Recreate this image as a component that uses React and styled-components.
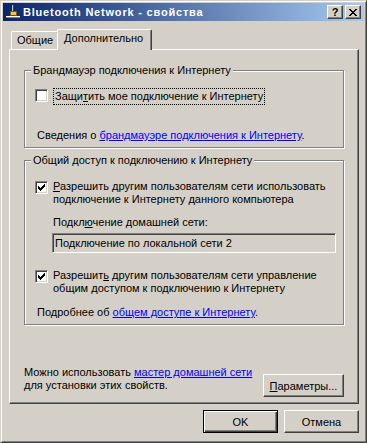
import React from 'react';
import styled, { createGlobalStyle } from 'styled-components';

const FACE = '#D4D0C8';
const SHADOW = '#808080';
const DARK = '#404040';
const LINK = '#0000FF';

const GlobalStyle = createGlobalStyle`
  html, body {
    margin: 0;
    padding: 0;
    background: ${FACE};
  }
  body {
    font-family: "Liberation Sans", Arial, "DejaVu Sans", sans-serif;
    font-size: 11px;
    color: #000;
  }
  * {
    box-sizing: border-box;
  }
`;

const WindowStyled = styled.div`
  width: 367px;
  height: 443px;
  display: flex;
  flex-direction: column;
  background: ${FACE};
  border: 1px solid;
  border-color: ${FACE} ${DARK} ${DARK} ${FACE};
  box-shadow: inset 1px 1px 0 #fff, inset -1px -1px 0 ${SHADOW};
  padding: 2px;
`;

const TitleBarStyled = styled.div`
  flex: none;
  height: 18px;
  display: flex;
  align-items: center;
  padding: 0 3px 0 2px;
  background: linear-gradient(to right, #0a246a, #a6caf0);
`;

const TitleIconStyled = styled.svg`
  flex: none;
  width: 16px;
  height: 16px;
`;

const TitleTextStyled = styled.span`
  flex: 1;
  margin-left: 2px;
  color: #fff;
  font-weight: bold;
  font-size: 11px;
  letter-spacing: 0.8px;
  white-space: nowrap;
`;

const CaptionButtonStyled = styled.div`
  flex: none;
  width: 16px;
  height: 14px;
  margin-left: ${({ $gap }) => $gap || 0}px;
  display: flex;
  align-items: center;
  justify-content: center;
  background: ${FACE};
  border: 1px solid;
  border-color: #fff ${DARK} ${DARK} #fff;
  box-shadow: inset -1px -1px 0 ${SHADOW};
  font-weight: bold;
  font-size: 11px;
  line-height: 12px;
`;

const BodyStyled = styled.div`
  flex: 1;
  display: flex;
  flex-direction: column;
  padding: 8px 5px 7px 6px;
`;

const TabStripStyled = styled.div`
  flex: none;
  height: 20px;
  display: flex;
  align-items: flex-end;
  padding-left: 2px;
`;

const TabStyled = styled.div`
  position: relative;
  width: ${({ $width }) => $width}px;
  height: ${({ $active }) => ($active ? 21 : 18)}px;
  margin-left: ${({ $active }) => ($active ? -2 : 0)}px;
  margin-bottom: ${({ $active }) => ($active ? -1 : 0)}px;
  z-index: ${({ $active }) => ($active ? 1 : 0)};
  padding-left: ${({ $active }) => ($active ? 6 : 5)}px;
  background: ${FACE};
  border-top: 1px solid #fff;
  border-left: 1px solid #fff;
  border-right: 1px solid ${DARK};
  border-radius: 2px 2px 0 0;
  box-shadow: inset -1px 0 0 ${SHADOW};
  line-height: 17px;
  white-space: nowrap;
`;

const PanelStyled = styled.div`
  flex: none;
  height: 355px;
  display: flex;
  flex-direction: column;
  padding: 0 14px 6px 14px;
  border: 1px solid;
  border-color: #fff ${DARK} ${DARK} #fff;
  box-shadow: inset -1px -1px 0 ${SHADOW};
`;

const GroupStyled = styled.div`
  display: flex;
  flex-direction: column;
  align-items: flex-start;
  margin-top: ${({ $top }) => $top}px;
  padding: 0 0 5px 10px;
  border: 1px solid ${SHADOW};
  box-shadow: 1px 1px 0 #fff, inset 1px 1px 0 #fff;
`;

const GroupTitleStyled = styled.div`
  margin: -7px 0 0 -4px;
  padding: 0 2px;
  background: ${FACE};
  line-height: 13px;
  white-space: nowrap;
`;

const CheckRowStyled = styled.div`
  display: flex;
  align-items: flex-start;
  margin-top: ${({ $top }) => $top}px;
`;

const CheckBoxStyled = styled.span`
  flex: none;
  width: 13px;
  height: 13px;
  margin-top: 1px;
  display: flex;
  align-items: center;
  justify-content: center;
  background: #fff;
  border: 1px solid;
  border-color: ${SHADOW} #fff #fff ${SHADOW};
  box-shadow: inset 1px 1px 0 ${DARK}, inset -1px -1px 0 ${FACE};
`;

const CheckLabelStyled = styled.span`
  margin-left: 5px;
  line-height: 13px;
  white-space: nowrap;
  ${({ $focus }) => ($focus ? 'padding: 1px; border: 1px dotted #000;' : '')}
`;

const TextStyled = styled.div`
  margin-top: ${({ $top }) => $top}px;
  margin-left: ${({ $left }) => $left || 0}px;
  line-height: 13px;
  white-space: nowrap;
`;

const LinkStyled = styled.span`
  color: ${LINK};
  text-decoration: underline;
`;

const KeyStyled = styled.span`
  text-decoration: underline;
`;

const FieldStyled = styled.div`
  width: 284px;
  height: 20px;
  margin-top: 4px;
  margin-left: 17px;
  padding-left: 2px;
  display: flex;
  align-items: center;
  background: ${FACE};
  border: 1px solid;
  border-color: ${SHADOW} #fff #fff ${SHADOW};
  box-shadow: inset 1px 1px 0 ${DARK}, inset -1px -1px 0 ${FACE};
  white-space: nowrap;
`;

const SpacerStyled = styled.div`
  flex: 1;
`;

const FooterStyled = styled.div`
  display: flex;
  justify-content: space-between;
  align-items: flex-end;
`;

const FooterTextStyled = styled.div`
  margin-bottom: 5px;
  line-height: 13px;
  white-space: nowrap;
`;

const ButtonStyled = styled.div`
  flex: none;
  width: ${({ $width }) => $width || 75}px;
  height: 23px;
  display: flex;
  align-items: center;
  justify-content: center;
  background: ${FACE};
  border: 1px solid;
  border-color: ${({ $default }) => ($default ? '#000' : `#fff ${DARK} ${DARK} #fff`)};
  box-shadow: ${({ $default }) => ($default
    ? `inset 1px 1px 0 #fff, inset -1px -1px 0 ${DARK}, inset -2px -2px 0 ${SHADOW}`
    : `inset -1px -1px 0 ${SHADOW}`)};
  white-space: nowrap;
`;

const ButtonRowStyled = styled.div`
  flex: none;
  display: flex;
  justify-content: flex-end;
  gap: 6px;
  margin-top: 6px;
`;

const CLOSE_ROWS = [
  [[0, 2], [6, 2]],
  [[1, 2], [5, 2]],
  [[2, 4]],
  [[3, 2]],
  [[2, 4]],
  [[1, 2], [5, 2]],
  [[0, 2], [6, 2]],
];

const CloseGlyph = () => (
  <svg width="8" height="7" viewBox="0 0 8 7" shapeRendering="crispEdges">
    {CLOSE_ROWS.map((row, y) => row.map(([x, w]) => (
      <rect key={`${y}-${x}`} x={x} y={y} width={w} height="1" fill="#000" />
    )))}
  </svg>
);

const CheckMark = () => (
  <svg width="7" height="7" viewBox="0 0 7 7" shapeRendering="crispEdges">
    <path
      d="M0 2h1v1h1v1h1v-1h1v-1h1v-1h1v-1h1v3h-1v1h-1v1h-1v1h-1v1h-1v-1h-1v-1h-1z"
      fill="#000"
    />
  </svg>
);

const NetworkIcon = () => (
  <TitleIconStyled viewBox="0 0 16 16" shapeRendering="crispEdges">
    <rect x="7" y="1" width="2" height="8" fill="#c0c0c0" />
    <rect x="8" y="1" width="1" height="8" fill="#404040" />
    <rect x="5" y="7" width="6" height="4" fill="#e8c850" stroke="#7a5a00" strokeWidth="1" />
    <rect x="1" y="12" width="14" height="1" fill="#ffffff" />
    <rect x="1" y="13" width="14" height="1" fill="#808080" />
    <rect x="7" y="11" width="2" height="1" fill="#404040" />
  </TitleIconStyled>
);

const Check = ({ checked }) => (
  <CheckBoxStyled>
    {checked ? <CheckMark /> : null}
  </CheckBoxStyled>
);

const App = () => (
  <>
    <GlobalStyle />
    <WindowStyled>
      <TitleBarStyled>
        <NetworkIcon />
        <TitleTextStyled>{'Bluetooth Network - свойства'}</TitleTextStyled>
        <CaptionButtonStyled>{'?'}</CaptionButtonStyled>
        <CaptionButtonStyled $gap={2}>
          <CloseGlyph />
        </CaptionButtonStyled>
      </TitleBarStyled>
      <BodyStyled>
        <TabStripStyled>
          <TabStyled $width={48}>{'Общие'}</TabStyled>
          <TabStyled $width={95} $active>{'Дополнительно'}</TabStyled>
        </TabStripStyled>
        <PanelStyled>
          <GroupStyled $top={20}>
            <GroupTitleStyled>{'Брандмауэр подключения к Интернету'}</GroupTitleStyled>
            <CheckRowStyled $top={11}>
              <Check />
              <CheckLabelStyled $focus>
                {'Защи'}
                <KeyStyled>{'т'}</KeyStyled>
                {'ить мое подключение к Интернету'}
              </CheckLabelStyled>
            </CheckRowStyled>
            <TextStyled $top={24} $left={2}>
              {'Сведения о '}
              <LinkStyled>{'брандмауэре подключения к Интернету'}</LinkStyled>
              {'.'}
            </TextStyled>
          </GroupStyled>
          <GroupStyled $top={12}>
            <GroupTitleStyled>{'Общий доступ к подключению к Интернету'}</GroupTitleStyled>
            <CheckRowStyled $top={13}>
              <Check checked />
              <CheckLabelStyled>
                <KeyStyled>{'Р'}</KeyStyled>
                {'азрешить другим пользователям сети использовать'}
                <br />
                {'подключение к Интернету данного компьютера'}
              </CheckLabelStyled>
            </CheckRowStyled>
            <TextStyled $top={10} $left={18}>
              {'Подкл'}
              <KeyStyled>{'ю'}</KeyStyled>
              {'чение домашней сети:'}
            </TextStyled>
            <FieldStyled>{'Подключение по локальной сети 2'}</FieldStyled>
            <CheckRowStyled $top={16}>
              <Check checked />
              <CheckLabelStyled>
                {'Разрешит'}
                <KeyStyled>{'ь'}</KeyStyled>
                {' другим пользователям сети управление'}
                <br />
                {'общим доступом к подключению к Интернету'}
              </CheckLabelStyled>
            </CheckRowStyled>
            <TextStyled $top={11} $left={2}>
              {'Подробнее об '}
              <LinkStyled>{'общем доступе к Интернету'}</LinkStyled>
              {'.'}
            </TextStyled>
          </GroupStyled>
          <SpacerStyled />
          <FooterStyled>
            <FooterTextStyled>
              {'Можно использовать '}
              <LinkStyled>{'мастер домашней сети'}</LinkStyled>
              <br />
              {'для установки этих свойств.'}
            </FooterTextStyled>
            <ButtonStyled $width={81}>
              <KeyStyled>{'П'}</KeyStyled>
              {'араметры...'}
            </ButtonStyled>
          </FooterStyled>
        </PanelStyled>
        <ButtonRowStyled>
          <ButtonStyled $default>{'OK'}</ButtonStyled>
          <ButtonStyled>{'Отмена'}</ButtonStyled>
        </ButtonRowStyled>
      </BodyStyled>
    </WindowStyled>
  </>
);

export default App;
